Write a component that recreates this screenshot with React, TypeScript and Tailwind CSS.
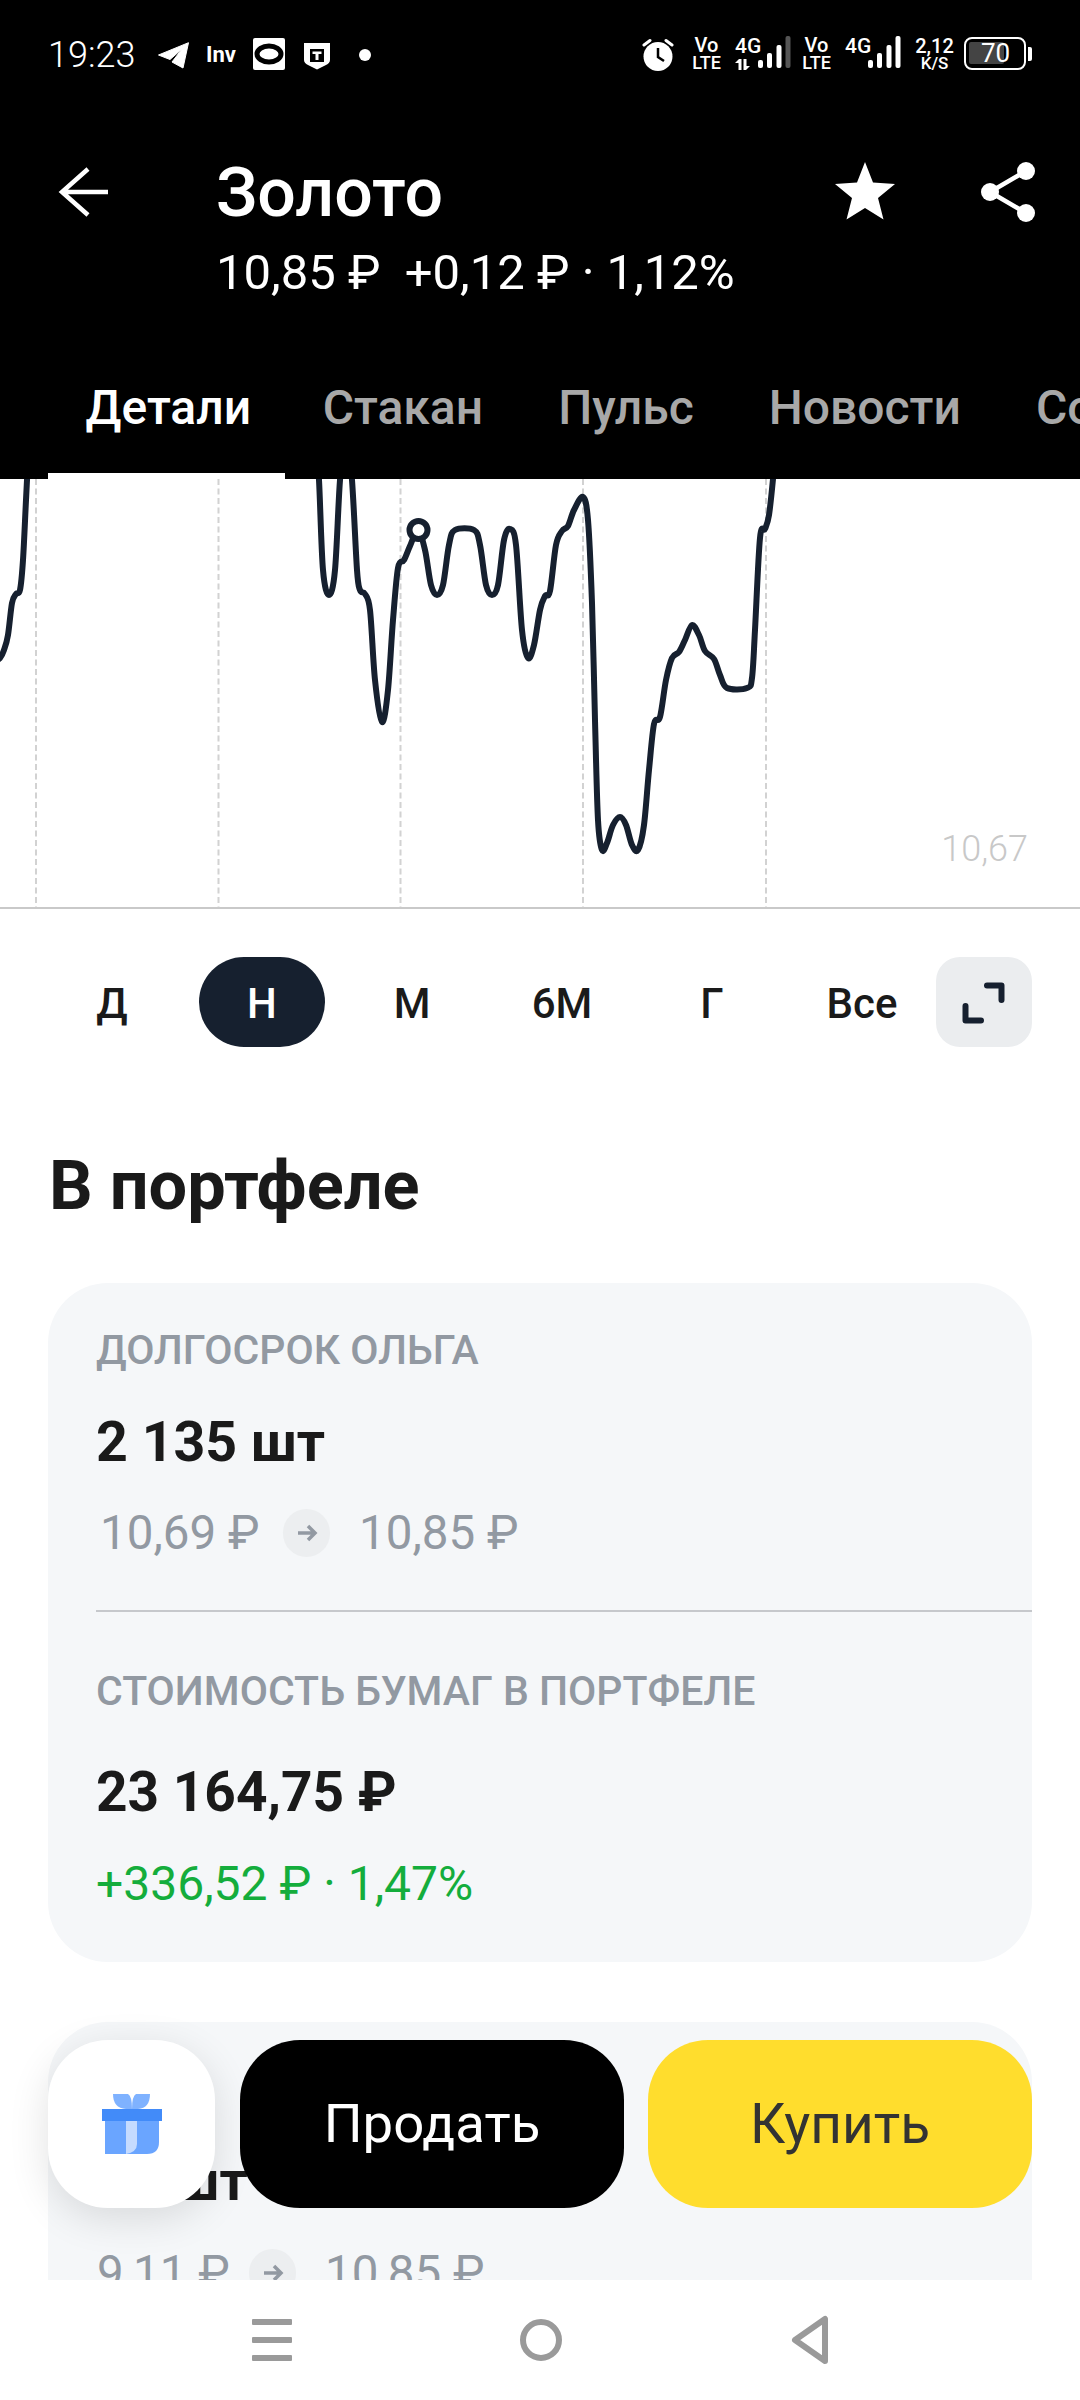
const leftCurve: [number, number][] = [
  [-6, 662], [0, 658], [4, 650], [8, 635], [12, 603], [16, 594], [20, 590], [23, 560], [26, 500], [29, 440],
];

const mainCurve: [number, number][] = [
  [316, 440], [319, 480], [323, 570], [329, 595], [335, 570], [340, 480], [346, 425], [352, 480], [357, 570], [360, 590], [365, 594],
  [370, 610], [375, 680], [382, 722], [388, 690], [393, 620], [398, 568], [404, 560], [410, 546], [418, 530],
  [425, 550], [431, 585], [437, 595], [443, 585], [449, 545], [455, 530], [474, 530], [480, 545], [486, 585], [492, 595], [498, 585],
  [504, 540], [510, 529], [516, 545], [522, 630], [528, 658], [534, 645], [540, 610], [545, 596], [550, 591],
  [556, 545], [562, 531], [568, 526], [574, 510], [583, 497], [588, 520], [592, 603], [595, 720], [598, 820],
  [602, 850], [607, 843], [613, 825], [620, 817], [626, 825], [632, 845], [638, 850], [644, 825], [649, 770], [654, 724], [660, 717],
  [666, 680], [672, 658], [679, 652], [685, 640], [692, 625], [699, 635], [705, 651], [714, 659], [720, 675], [727, 688], [747, 688],
  [752, 678], [755, 630], [760, 538], [765, 529], [769, 515], [773, 479], [776, 440],
];

// catmull-rom through the points, good enough for the price line
const toPath = (pts: [number, number][]) => {
  let d = `M${pts[0][0]} ${pts[0][1]}`;
  for (let i = 0; i < pts.length - 1; i++) {
    const p0 = pts[i - 1] ?? pts[i];
    const p1 = pts[i];
    const p2 = pts[i + 1];
    const p3 = pts[i + 2] ?? p2;
    const c1x = p1[0] + (p2[0] - p0[0]) / 6;
    const c1y = p1[1] + (p2[1] - p0[1]) / 6;
    const c2x = p2[0] - (p3[0] - p1[0]) / 6;
    const c2y = p2[1] - (p3[1] - p1[1]) / 6;
    d += ` C${c1x.toFixed(1)} ${c1y.toFixed(1)} ${c2x.toFixed(1)} ${c2y.toFixed(1)} ${p2[0]} ${p2[1]}`;
  }
  return d;
};

const SignalBars = ({ dim }: { dim?: boolean }) => (
  <svg width="33" height="33" viewBox="0 0 33 33" className="block">
    <rect x="0" y="24" width="5" height="8" rx="2" fill="#fff" />
    <rect x="9" y="17" width="5" height="15" rx="2" fill="#fff" />
    <rect x="18.5" y="9" width="5" height="23" rx="2" fill="#fff" />
    <rect x="27.5" y="0" width="5" height="32" rx="2" fill={dim ? '#555' : '#fff'} />
  </svg>
);

const VoLte = () => (
  <div className="flex flex-col items-center w-[29px] text-white font-medium">
    <span className="text-[20px] leading-[16px]">Vo</span>
    <span className="text-[18px] leading-[16px] mt-[2px]">LTE</span>
  </div>
);

const StatusBar = () => (
  <div className="h-[110px] flex items-start pt-[37px] pl-[48px] pr-[48px]">
    <span className="text-[36px] leading-[36px] text-white w-[110px] h-[36px] font-light">19:23</span>
    <svg width="31" height="27" viewBox="0 0 31 27" className="mt-[5px]">
      <path d="M30.5 0.7 L0.5 13 L12 17.5 L24 7 L14 20 L25 26 Z" fill="#fff" stroke="#fff" strokeWidth="1" strokeLinejoin="round" />
    </svg>
    <span className="ml-[17px] mt-[7px] w-[31px] text-[22px] leading-[22px] font-bold text-white">Inv</span>
    <svg width="32" height="32" viewBox="0 0 32 32" className="ml-[16px] mt-[1px]">
      <rect width="32" height="32" rx="2" fill="#fff" />
      <ellipse cx="16" cy="16" rx="12" ry="8" fill="none" stroke="#000" strokeWidth="5" />
    </svg>
    <svg width="26" height="27" viewBox="0 0 26 27" className="ml-[19px] mt-[6px]">
      <path d="M0 0 H26 V17 Q26 20 22 22 L13 26.5 L4 22 Q0 20 0 17 Z" fill="#fff" />
      <rect x="6" y="6" width="14" height="13" fill="#000" />
      <path d="M8.5 8.5 H17.5 V11 H14.5 V17 H11.5 V11 H8.5 Z" fill="#fff" />
    </svg>
    <div className="ml-[29px] mt-[12px] w-[12px] h-[12px] rounded-full bg-white" />

    <div className="ml-auto flex items-start">
      <svg width="32" height="33" viewBox="0 0 32 33" className="mt-[1px]">
        <circle cx="16" cy="18.5" r="14.5" fill="#fff" />
        <path d="M16 10 V19 L22 23" fill="none" stroke="#000" strokeWidth="2.5" />
        <path d="M2 7 L8 2.5 M30 7 L24 2.5" stroke="#fff" strokeWidth="3" strokeLinecap="round" />
      </svg>
      <div className="ml-[18px]"><VoLte /></div>
      <div className="ml-[14px] w-[24px] flex flex-col items-start text-white">
        <span className="text-[21px] leading-[18px] font-medium">4G</span>
        <svg width="15" height="11" viewBox="0 0 15 11" className="mt-[4px]">
          <path d="M0 4 L4 0 H6.5 V11 H3.5 V4 Z M8.5 0 H11.5 V7 H15 L11 11 H8.5 Z" fill="#fff" />
        </svg>
      </div>
      <div className="ml-[-1px] mt-[-1px]"><SignalBars dim /></div>
      <div className="ml-[11px]"><VoLte /></div>
      <span className="ml-[14px] w-[24px] text-[21px] leading-[18px] font-medium text-white">4G</span>
      <div className="ml-[-1px] mt-[-1px]"><SignalBars /></div>
      <div className="ml-[15px] w-[37px] flex flex-col items-center text-white font-medium">
        <span className="text-[20px] leading-[18px]">2,12</span>
        <span className="text-[17px] leading-[16px]">K/S</span>
      </div>
      <div className="ml-[11px] w-[62px] h-[33px] border-[2.5px] border-white rounded-[8px] p-[3px] relative">
        <div className="w-[35px] h-[22px] bg-[#444] rounded-[2px]" />
        <span className="absolute left-[15px] top-0 text-[26px] leading-[28px] text-white">70</span>
      </div>
      <div className="ml-[2px] mt-[10px] w-[4px] h-[14px] bg-white rounded-r-[2px]" />
    </div>
  </div>
);

const Header = () => (
  <div className="bg-black text-white h-[479px] shrink-0 overflow-hidden">
    <StatusBar />
    <div className="mt-[46px] flex h-[72px] items-center pl-[58px] pr-[44px]">
      <svg width="52" height="52" viewBox="0 0 52 52" className="shrink-0">
        <path d="M50 26 H4 M30 3 L4 26 L30 49" fill="none" stroke="#fff" strokeWidth="4.5" />
      </svg>
      <span className="ml-[106px] pt-[2px] text-[68px] leading-[72px] font-medium">Золото</span>
      <svg width="60" height="58" viewBox="0 0 60 58" className="ml-auto shrink-0 mt-[-2px]">
        <path d="M30 0 L38 20.5 L60 22 L43 36 L48.5 57.5 L30 46 L11.5 57.5 L17 36 L0 22 L22 20.5 Z" fill="#fff" />
      </svg>
      <svg width="56" height="62" viewBox="0 0 56 62" className="ml-[85px] shrink-0">
        <path d="M46 10 L10 31 L46 52" fill="none" stroke="#fff" strokeWidth="4.5" />
        <circle cx="46" cy="10" r="9" fill="#fff" />
        <circle cx="10" cy="31" r="9" fill="#fff" />
        <circle cx="46" cy="52" r="9" fill="#fff" />
      </svg>
    </div>
    <div className="mt-[17px] pl-[216px] text-[49px] leading-[56px] whitespace-pre">10,85 ₽  +0,12 ₽ · 1,12%</div>
    <div className="mt-[79px] flex pl-[48px] whitespace-nowrap">
      {['Детали', 'Стакан', 'Пульс', 'Новости', 'События'].map((tab, i) => (
        <div
          key={tab}
          className={`pl-[37.5px] pb-[37px] border-b-[6px] text-[48px] leading-[56px] font-medium ${i === 0 ? 'pr-[34px] border-white text-white' : 'pr-[37.5px] border-transparent text-[#a8a8a8]'}`}
        >
          {tab}
        </div>
      ))}
    </div>
  </div>
);

const Chart = () => (
  <div className="relative h-[430px] border-b-2 border-[#c9c9c9]">
    <svg viewBox="0 479 1080 428" className="block w-[1080px] h-[428px]">
      {[36, 218.5, 400.5, 583, 766].map(x => (
        <line key={x} x1={x} x2={x} y1="479" y2="908" stroke="#d2d2d2" strokeWidth="2" strokeDasharray="6 3.5" />
      ))}
      <path d={toPath(leftCurve)} fill="none" stroke="#16202f" strokeWidth="6" />
      <path d={toPath(mainCurve)} fill="none" stroke="#16202f" strokeWidth="6" />
      <circle cx="418.5" cy="530" r="9" fill="#fff" stroke="#16202f" strokeWidth="6" />
    </svg>
    <span className="absolute right-[52px] bottom-[38px] text-[36px] leading-[40px] text-[#c8c8c8] font-light">10,67</span>
  </div>
);

const Periods = () => (
  <div className="mt-[48px] flex h-[90px] pl-[49px] gap-[24px]">
    {['Д', 'Н', 'М', '6М', 'Г', 'Все'].map((p, i) => (
      <div
        key={p}
        className={`w-[126px] pt-[3px] flex items-center justify-center rounded-full text-[42px] font-medium ${i === 1 ? 'bg-[#16202f] text-white' : 'text-[#1a1a1a]'}`}
      >
        {p}
      </div>
    ))}
    <div className="ml-[-13px] w-[96px] rounded-[24px] bg-[#ebedef]">
      <svg width="96" height="90" viewBox="0 0 96 90" className="block">
        <path d="M51 28.5 H65.5 V43 M29.5 49 V63.5 H45" fill="none" stroke="#16202f" strokeWidth="6" strokeLinecap="round" strokeLinejoin="round" />
      </svg>
    </div>
  </div>
);

const Arrow = () => (
  <div className="w-[47px] h-[48px] rounded-full bg-[#eceef0] flex items-center justify-center">
    <svg width="22" height="22" viewBox="0 0 22 22">
      <path d="M2 11 H19 M12 4 L19 11 L12 18" fill="none" stroke="#9299a2" strokeWidth="3.5" />
    </svg>
  </div>
);

const PriceRow = ({ from, to, fromW }: { from: string; to: string; fromW: string }) => (
  <div className="flex items-center h-[56px] text-[47.5px] leading-[56px] text-[#9299a2] whitespace-nowrap">
    <span className={fromW}>{from}</span>
    <Arrow />
    <span className="ml-[29px]">{to}</span>
  </div>
);

const GiftIcon = () => (
  <svg width="60" height="60" viewBox="0 0 60 60">
    <path d="M11 0 H26 Q30 2 30 15 H24 Q11 14 11 0 Z" fill="#7fb2ff" />
    <path d="M48 0 H34 Q30 2 30 15 H36 Q48 14 48 0 Z" fill="#7fb2ff" />
    <path d="M3 27 H57 V48 Q57 60 45 60 H3 Z" fill="#6aa5ff" />
    <path d="M24 27 H35 V50 Q35 58 24 60 Z" fill="#c5dbff" />
    <rect x="0" y="15" width="60" height="12" fill="#428bf9" />
  </svg>
);

const NavBar = () => (
  <div className="h-[120px] bg-white flex items-center justify-center shrink-0 relative">
    <div className="w-[40px] flex flex-col gap-[12px] mr-[228px]">
      <div className="h-[6px] rounded-[1px] bg-[#9a9a9a]" />
      <div className="h-[6px] rounded-[1px] bg-[#9a9a9a]" />
      <div className="h-[6px] rounded-[1px] bg-[#9a9a9a]" />
    </div>
    <div className="w-[42px] h-[42px] rounded-full border-[6px] border-[#9a9a9a] mr-[229px]" />
    <svg width="38" height="50" viewBox="0 0 38 50" className="block">
      <path d="M34 4 V46 L4 25 Z" fill="none" stroke="#9a9a9a" strokeWidth="6" strokeLinejoin="round" />
    </svg>
  </div>
);

export default function App() {
  return (
    <div className="w-[1080px] h-[2400px] flex flex-col bg-white overflow-hidden font-['Roboto',sans-serif]">
      <Header />
      <div className="relative flex-1 overflow-hidden">
        <Chart />
        <Periods />
        <h2 className="mt-[99px] pl-[49px] text-[68.5px] leading-[80px] font-bold text-[#1a1a1a]">В портфеле</h2>

        <div className="mt-[57px] mx-[48px] rounded-[60px] bg-[#f5f7f9] pt-[43px] pb-[50px]">
          <div className="pl-[48px] text-[41px] leading-[48px] font-medium text-[#9299a2]">ДОЛГОСРОК ОЛЬГА</div>
          <div className="mt-[37px] pl-[48px] text-[55.5px] leading-[64px] font-bold text-[#1a1a1a]">2 135 шт</div>
          <div className="mt-[30px] pl-[52px]">
            <PriceRow from="10,69 ₽" to="10,85 ₽" fromW="w-[183px]" />
          </div>
          <div className="mt-[49px] ml-[48px] h-[2px] bg-[#c6c8cc]" />
          <div className="mt-[55px] pl-[48px] text-[41px] leading-[48px] font-medium text-[#9299a2]">СТОИМОСТЬ БУМАГ В ПОРТФЕЛЕ</div>
          <div className="mt-[45px] pl-[48px] text-[55px] leading-[64px] font-bold text-[#1a1a1a]">23 164,75 ₽</div>
          <div className="mt-[32px] pl-[48px] text-[48px] leading-[56px] text-[#14ad3c] whitespace-pre">+336,52 ₽ · 1,47%</div>
        </div>

        <div className="mt-[60px] mx-[48px] rounded-t-[60px] bg-[#f5f7f9] pt-[128px] pb-[50px]">
          <div className="pl-[48px] text-[55.5px] leading-[64px] font-bold text-[#1a1a1a]">64 шт</div>
          <div className="mt-[31px] pl-[49px]">
            <PriceRow from="9,11 ₽" to="10,85 ₽" fromW="w-[152px]" />
          </div>
        </div>

        <div className="absolute left-[48px] right-[48px] top-[1561px] flex h-[168px]">
          <div className="w-[167px] rounded-[60px] bg-white shadow-[0_10px_40px_rgba(0,0,0,0.12)] flex items-center justify-center">
            <GiftIcon />
          </div>
          <div className="ml-[25px] w-[384px] rounded-[60px] bg-black flex items-center justify-center text-[54.5px] text-white">Продать</div>
          <div className="ml-[24px] w-[384px] rounded-[60px] bg-[#ffdd2d] flex items-center justify-center text-[55px] text-[#333]">Купить</div>
        </div>
      </div>
      <NavBar />
    </div>
  );
}
